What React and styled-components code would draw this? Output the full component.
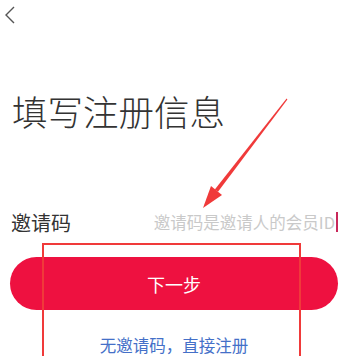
import React from "react";
import styled, { createGlobalStyle } from "styled-components";

const GlobalStyle = createGlobalStyle`
  body {
    margin: 0;
    background: #ffffff;
    font-family: "Noto Sans CJK SC", "Noto Sans", sans-serif;
  }
`;

const Page = styled.div`
  position: relative;
  width: 360px;
  height: 356px;
  overflow: hidden;
  background: #ffffff;
`;

const Header = styled.div`
  height: 30px;
  display: flex;
  align-items: center;
  padding-left: 4px;
`;

const BackButton = styled.button`
  display: flex;
  align-items: center;
  padding: 0;
  border: none;
  background: none;
  cursor: pointer;
`;

const Title = styled.h1`
  margin: 61px 0 0 12px;
  font-size: 35.5px;
  line-height: 40px;
  font-weight: 300;
  color: #333333;
`;

const FieldRow = styled.div`
  display: flex;
  align-items: center;
  height: 40px;
  margin-top: 71px;
  padding: 0 22px 0 11px;
`;

const Label = styled.span`
  font-size: 20px;
  color: #333333;
`;

const InputBox = styled.div`
  flex: 1;
  display: flex;
  align-items: center;
  justify-content: flex-end;
`;

const Placeholder = styled.span`
  font-size: 16.5px;
  color: #c9c9c9;
`;

const Caret = styled.span`
  width: 2px;
  height: 20px;
  margin-left: 1px;
  background: #c8285a;
`;

const NextButton = styled.button`
  display: block;
  width: 328px;
  height: 53px;
  margin: 15px 0 0 10px;
  border: none;
  border-radius: 27px;
  background: #ee1140;
  color: #ffffff;
  font-family: inherit;
  font-size: 18px;
  cursor: pointer;
`;

const SkipLink = styled.div`
  margin-top: 23px;
  width: 348px;
  text-align: center;
  font-size: 16.5px;
  line-height: 24px;
  color: #4470c8;
`;

// annotation overlays from the screenshot
const Highlight = styled.div`
  position: absolute;
  left: 42px;
  top: 243px;
  width: 255px;
  height: 140px;
  border: 2.5px solid #f03a3a;
  pointer-events: none;
`;

const Overlay = styled.svg`
  position: absolute;
  left: 0;
  top: 0;
  pointer-events: none;
`;

const App = () => {
  return (
    <Page>
      <GlobalStyle />
      <Header>
        <BackButton aria-label="back">
          <svg width="12" height="20" viewBox="0 0 12 20">
            <path
              d="M10 2 L2 10 L10 18"
              fill="none"
              stroke="#555555"
              strokeWidth="1.4"
            />
          </svg>
        </BackButton>
      </Header>

      <Title>填写注册信息</Title>

      <FieldRow>
        <Label>邀请码</Label>
        <InputBox>
          <Placeholder>邀请码是邀请人的会员ID</Placeholder>
          <Caret />
        </InputBox>
      </FieldRow>

      <NextButton>下一步</NextButton>

      <SkipLink>无邀请码，直接注册</SkipLink>

      <Highlight />
      <Overlay width="360" height="356" viewBox="0 0 360 356">
        <polygon
          points="286.6,98.6 287.4,99.4 218,191.8 214.8,189.4"
          fill="#f03a3a"
        />
        <polygon points="203,208 211,186 222,195" fill="#f03a3a" />
      </Overlay>
    </Page>
  );
};

export default App;
